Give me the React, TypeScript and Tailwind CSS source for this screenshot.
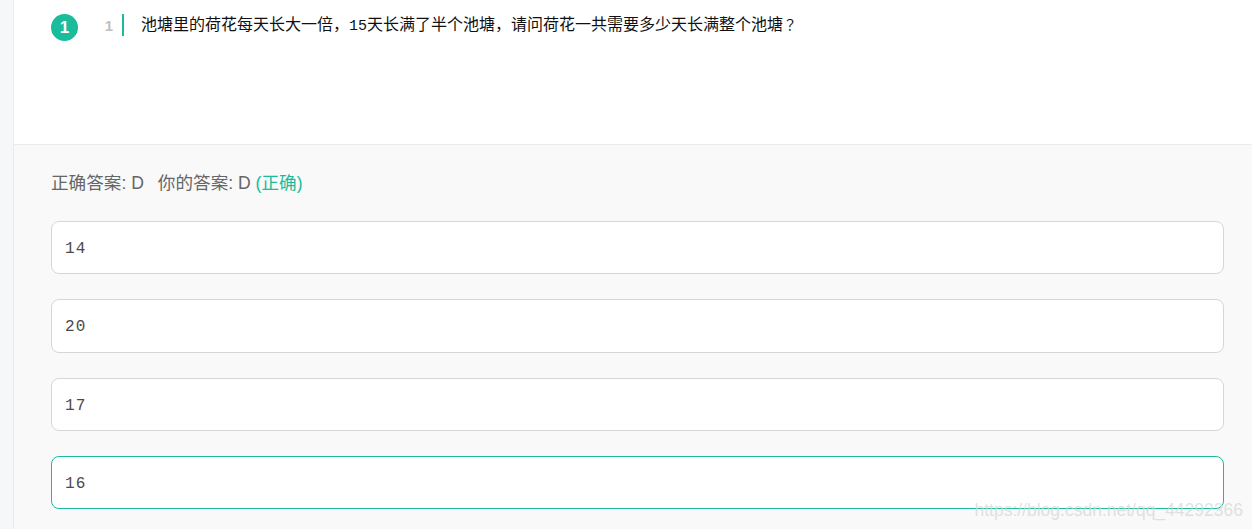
import React from 'react';

const options = ['14', '20', '17', '16'];
const correctOption = '16';

const Option: React.FC<{ label: string; active: boolean }> = ({ label, active }) => (
  <div
    className={`h-[53.33px] flex items-center px-[13px] pt-[3px] bg-white rounded-lg border ${
      active ? 'border-[#1abc9c]' : 'border-[#d6d6d6]'
    }`}
  >
    <span className="font-['Liberation_Mono',monospace] text-[16px] text-[#4a4a4a] tracking-[1.2px]">{label}</span>
  </div>
);

export default function App() {
  return (
    <div className="relative h-[529px] w-[1252px] overflow-hidden flex bg-[#f5f7f9] font-['Noto_Sans_CJK_SC','Liberation_Sans',sans-serif]">
      <div className="w-[13px] shrink-0" />
      <main className="flex-1 border-l border-[#ebebeb] flex flex-col">
        <section className="h-[145px] shrink-0 bg-white border-b border-[#ececec] flex items-start pt-[14px] pl-[37px]">
          <div className="w-[27px] h-[27px] rounded-full bg-[#1abc9c] text-white flex items-center justify-center text-[17px] font-bold font-['Liberation_Sans',sans-serif]">
            1
          </div>
          <div className="ml-[24px] w-[11px] h-[22px] text-right text-[15px] leading-[24px] font-bold text-[#c0c0c0] font-['Liberation_Sans',sans-serif]">
            1
          </div>
          <div className="ml-[9px] w-[2px] h-[22px] bg-[#1abc9c]" />
          <p className="ml-[17px] -mt-[2px] text-[16px] leading-[22px] text-[#111] whitespace-nowrap">
            池塘里的荷花每天长大一倍，<span className="font-['Liberation_Mono',monospace] text-[15px]">15</span>天长满了半个池塘，请问荷花一共需要多少天长满整个池塘<span className="text-[14px] font-['Noto_Sans_CJK_TC',sans-serif]">？</span>
          </p>
        </section>
        <section className="flex-1 bg-[#f9f9f9] pl-[37px] pr-[28px] pt-[25px]">
          <p className="text-[17.6px] leading-[26px] text-[#666] whitespace-nowrap font-['Liberation_Sans','Noto_Sans_CJK_SC',sans-serif]">
            正确答案: D<span className="ml-[14px]">你的答案: D</span>{' '}
            <span className="text-[#1abc9c]">(正确)</span>
          </p>
          <div className="mt-[25px] flex flex-col gap-[25px]">
            {options.map((o) => (
              <Option key={o} label={o} active={o === correctOption} />
            ))}
          </div>
        </section>
      </main>
      <span className="absolute right-[9px] bottom-[7px] text-[17.5px] leading-[24px] text-[#d4d4d4]/70 font-['Liberation_Sans',sans-serif]">
        https://blog.csdn.net/qq_44292366
      </span>
    </div>
  );
}
